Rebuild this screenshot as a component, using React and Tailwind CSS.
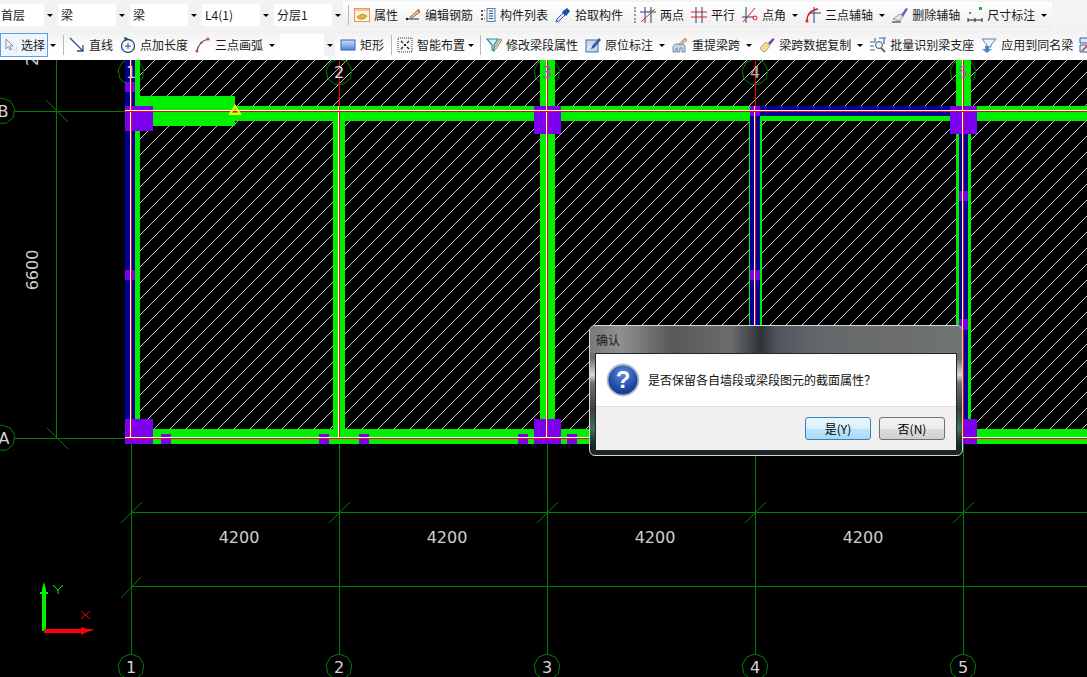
import React from 'react';

const FONT = '"Noto Sans CJK SC", "Liberation Sans", sans-serif';
const GREEN = '#00f000';
const BLUE = '#000096';
const PURPLE = '#7a00ee';
const GRID = '#008000';

const Svg = ({ children }) => (
  <svg width="16" height="16" viewBox="0 0 16 16" fill="none" className="shrink-0">{children}</svg>
);

const icons = {
  props: <Svg><rect x="0.5" y="1.5" width="15" height="13" fill="#fdf3dc" stroke="#e59a5c" /><rect x="1" y="2" width="14" height="2" fill="#f3c68f" /><path d="M3 10l5-3 5 2-3 3H5z" fill="#e8b33c" stroke="#a9782a" strokeWidth="0.7" /></Svg>,
  rebar: <Svg><path d="M1 12h13" stroke="#222" /><path d="M5 10l8-7 2 2-8 6z" fill="#e5c18d" stroke="#8a5a3a" strokeWidth="0.8" /><path d="M12 3l2-1 1 2-1 1z" fill="#d05050" /><circle cx="2" cy="12" r="1.2" fill="#222" /></Svg>,
  list: <Svg><rect x="7" y="1.5" width="8" height="13" fill="#e9f0f8" stroke="#5a7ea8" /><path d="M9 4h4M9 6.500h4M9 9h4M9 11.500h4" stroke="#3a5a88" /><path d="M1 3h2v2H1zM1 7h2v2H1zM1 11h2v2H1zM4 3h1v1H4zM4 11h1v1H4z" fill="#555" /></Svg>,
  dropper: <Svg><path d="M1 15l1-3 6-6 2 2-6 6z" fill="#dce8f6" stroke="#2e5aa8" /><path d="M8 4l4-3 3 3-3 4-1 1-4-4z" fill="#1f4fa0" /></Svg>,
  twoPoint: <Svg><path d="M5 0v16M11 0v16M0 5h16" stroke="#2d3a78" /><path d="M1 15L15 2" stroke="#d82020" /><circle cx="11" cy="4.500" r="1.700" fill="#3fa03f" /></Svg>,
  parallel: <Svg><path d="M5 0v16M11 0v16" stroke="#2d3a78" /><path d="M0 5h16M0 10h16" stroke="#d82020" /></Svg>,
  angle: <Svg><path d="M4 0v16M0 10h12" stroke="#2d3a78" /><path d="M1 15L13 1" stroke="#d82020" /><circle cx="13" cy="11" r="2" stroke="#d82020" /></Svg>,
  arc: <Svg><path d="M9 0v16M4 6h12" stroke="#2d3a78" /><path d="M2 14C2 7 6 3 13 2" stroke="#d82020" strokeWidth="1.300" /><circle cx="2" cy="14" r="1.500" fill="#d82020" /></Svg>,
  erase: <Svg><path d="M9 8l5-7 2 1-5 8z" fill="#6a5acd" /><path d="M11 9l-3 -2c-2 1-4 3-7 5l6 2c2-1 3-3 4-5z" fill="#e8e2d0" stroke="#777" strokeWidth="0.7" /><path d="M0 15h9" stroke="#222" /></Svg>,
  dim: <Svg><rect x="2" y="5" width="2" height="2" fill="#36a836" /><rect x="12" y="0" width="3" height="3" fill="#36a836" /><path d="M1 13h14M1 11v4M15 11v4M8 11v4" stroke="#222" /></Svg>,
  cursor: <Svg><path d="M3 2v10l2.500-2.500 1.500 3.500 1.500-.6-1.500-3.400H10z" fill="#f4f6f8" stroke="#8a8f96" /><path d="M11 13h1M13 11h1M13 14h1" stroke="#b0b4ba" /></Svg>,
  line: <Svg><path d="M1 1l13 13M14 8v6H8" stroke="#28507f" strokeWidth="1.300" /></Svg>,
  pointLen: <Svg><circle cx="8" cy="9" r="6.500" stroke="#2c4a78" strokeWidth="1.300" /><path d="M5 9h6M8 6v6" stroke="#2c4a78" /><path d="M4 0l4 1-3 3z" fill="#2c4a78" /></Svg>,
  threeArc: <Svg><path d="M2 14C3 8 7 4 13 2" stroke="#3d5f88" strokeWidth="1.300" /><circle cx="2" cy="14" r="1.600" fill="#d0503c" /><circle cx="6" cy="6" r="1.300" fill="#d0503c" /><circle cx="13" cy="2" r="1.600" fill="#d0503c" /></Svg>,
  rect: <Svg><defs><linearGradient id="rg" x1="0" y1="0" x2="0" y2="1"><stop offset="0" stopColor="#cfe0f8" /><stop offset="1" stopColor="#4f86dc" /></linearGradient></defs><rect x="1" y="3" width="14" height="10" fill="url(#rg)" stroke="#2f62b8" /></Svg>,
  smart: <Svg><rect x="1" y="1" width="14" height="14" stroke="#333" strokeDasharray="1 1" fill="#f2f6fb" /><path d="M4 4l2 2M12 4l-2 2M4 12l2-2M12 12l-2-2" stroke="#222" strokeWidth="1.300" /><rect x="7" y="7" width="2" height="2" fill="#222" /></Svg>,
  funnel: <Svg><path d="M1 2h11L8 8v6l-2-1V8z" fill="#d8f0f4" stroke="#2a8ea0" strokeWidth="1.200" /><path d="M8 11l6-9 2 1-6 9-2 1z" fill="#e8d5a8" stroke="#555" strokeWidth="0.600" /></Svg>,
  origin: <Svg><rect x="1" y="3" width="12" height="12" fill="#c7d7ee" stroke="#4a6f9e" /><path d="M2 13l3-4 3 2 3-3" stroke="#fff" /><path d="M7 9l7-8 2 2-7 8-3 1z" fill="#2e5fa8" /></Svg>,
  reBeam: <Svg><path d="M1 15V10c0-2 2-3 3-3h6c2 0 3 1 3 3v5h-3v-4H8v4H5v-4H4v4z" fill="#c7d5e6" stroke="#5b7ba0" strokeWidth="0.800" /><path d="M7 7l6-6 2 2-6 5z" fill="#e6c49a" stroke="#8a5a3a" strokeWidth="0.600" /></Svg>,
  brush: <Svg><path d="M1 11l6-6 4 4-5 6c-2 0-4-2-5-4z" fill="#f0dd96" stroke="#9a8a50" strokeWidth="0.700" /><path d="M9 6l5-5 1.500 1.500L11 8z" fill="#5d4aa8" /></Svg>,
  batch: <Svg><path d="M0 5h5M0 9h4M0 13h5M9 1h7M14 1v6M5 1v4" stroke="#2a6fb5" strokeWidth="1.200" /><circle cx="9" cy="8" r="3.500" fill="#e8f2fb" stroke="#555" /><path d="M11 11l4 4" stroke="#666" strokeWidth="2" /></Svg>,
  apply: <Svg><path d="M1 2h14L10 8v2H6V8z" fill="#eef4fb" stroke="#5f7fa8" /><path d="M4 9h4v3h3l-5 4-5-4h3z" fill="#4a86d0" /></Svg>,
  last: <Svg><path d="M1 1h9v5H1zM1 8h9v7H1z" fill="#dfe9f5" stroke="#2a5fa0" /><path d="M3 14l6-6" stroke="#c83030" strokeWidth="1.500" /></Svg>,
};

const Arrow = ({ className = '' }) => (
  <div className={`w-0 h-0 shrink-0 border-x-[3px] border-t-[3px] border-x-transparent border-t-black ${className}`} />
);

const Sep = ({ className = '' }) => <div className={`w-px h-[20px] shrink-0 bg-[#b8b8b8] ${className}`} />;

const Select = ({ label, className }) => (
  <div className={`flex h-[22px] items-stretch bg-white shrink-0 ${className}`}>
    <span className="flex-1 pl-[1px] text-[12px] leading-[22px] whitespace-nowrap">{label}</span>
    <div className="flex w-[11px] items-center justify-center bg-[#f1f1f1]">
      <Arrow />
    </div>
  </div>
);

const Tool = ({ icon, label, className = '' }) => (
  <div className={`flex items-center shrink-0 ${className}`}>
    {icons[icon]}
    <span className="ml-[4px] text-[12px] leading-none whitespace-nowrap">{label}</span>
  </div>
);

const TopBar = () => (
  <div className="flex h-[30px] items-center bg-[#f3f3f3] overflow-hidden">
    <Select label="首层" className="w-[55px]" />
    <Select label="梁" className="w-[69px] ml-[3px] pl-[2px]" />
    <Select label="梁" className="w-[69px] ml-[3px] pl-[2px]" />
    <Select label="L4(1)" className="w-[69px] ml-[3px] pl-[2px]" />
    <Select label="分层1" className="w-[69px] ml-[3px] pl-[2px]" />
    <div className="flex h-[26px] w-[709px] items-center bg-gradient-to-b from-[#ffffff] to-[#eeeeee]">
      <Sep className="ml-[5px]" />
      <Tool icon="props" label="属性" className="ml-[5px]" />
      <Tool icon="rebar" label="编辑钢筋" className="ml-[7px]" />
      <Tool icon="list" label="构件列表" className="ml-[7px]" />
      <Tool icon="dropper" label="拾取构件" className="ml-[7px]" />
      <div className="ml-[11px] h-[16px] w-[2px] shrink-0 border-l-2 border-dotted border-[#999]" />
      <Tool icon="twoPoint" label="两点" className="ml-[4px]" />
      <Tool icon="parallel" label="平行" className="ml-[7px]" />
      <Tool icon="angle" label="点角" className="ml-[7px]" />
      <Arrow className="ml-[6px]" />
      <Tool icon="arc" label="三点辅轴" className="ml-[7px]" />
      <Arrow className="ml-[6px]" />
      <Tool icon="erase" label="删除辅轴" className="ml-[7px]" />
      <Tool icon="dim" label="尺寸标注" className="ml-[7px]" />
      <Arrow className="ml-[6px]" />
    </div>
  </div>
);

const DrawBar = () => (
  <div className="flex h-[30px] items-center bg-gradient-to-b from-[#f0f0f0] via-[#fcfcfc] to-[#ffffff] overflow-hidden">
    <div className="flex h-[24px] w-[48px] shrink-0 items-center border border-[#5aa0e0] bg-[#eef6fd] pl-[2px]">
      {icons.cursor}
      <span className="ml-[2px] text-[12px] leading-none whitespace-nowrap">选择</span>
    </div>
    <Arrow className="ml-[2px]" />
    <Sep className="ml-[7px]" />
    <Tool icon="line" label="直线" className="ml-[5px]" />
    <Tool icon="pointLen" label="点加长度" className="ml-[7px]" />
    <Tool icon="threeArc" label="三点画弧" className="ml-[7px]" />
    <Arrow className="ml-[6px]" />
    <Select label="" className="w-[55px] ml-[5px]" />
    <Tool icon="rect" label="矩形" className="ml-[5px]" />
    <Sep className="ml-[7px]" />
    <Tool icon="smart" label="智能布置" className="ml-[5px]" />
    <Arrow className="ml-[3px]" />
    <Sep className="ml-[6px]" />
    <Tool icon="funnel" label="修改梁段属性" className="ml-[5px]" />
    <Tool icon="origin" label="原位标注" className="ml-[7px]" />
    <Arrow className="ml-[6px]" />
    <Tool icon="reBeam" label="重提梁跨" className="ml-[7px]" />
    <Arrow className="ml-[6px]" />
    <Tool icon="brush" label="梁跨数据复制" className="ml-[7px]" />
    <Arrow className="ml-[6px]" />
    <Tool icon="batch" label="批量识别梁支座" className="ml-[7px]" />
    <Tool icon="apply" label="应用到同名梁" className="ml-[7px]" />
    <div className="ml-[6px] shrink-0">{icons.last}</div>
  </div>
);

// x, y, w, h, colour, in screenshot coordinates
const beams = [
  // wall strips and beams
  [125, 60, 10, 359, BLUE], [135, 60, 5, 369, GREEN],
  [333, 106, 12, 323, GREEN],
  [540, 60, 15, 369, GREEN],
  [749, 121, 1, 210, GREEN], [750, 106, 10, 225, BLUE], [760, 116, 2, 215, GREEN],
  [956, 60, 15, 46, GREEN], [956, 134, 3, 300, GREEN], [959, 134, 9, 300, BLUE], [968, 134, 3, 300, GREEN],
  [135, 96, 100, 30, GREEN],
  [235, 106, 515, 15, GREEN], [760, 116, 190, 5, GREEN], [760, 106, 190, 10, BLUE], [977, 106, 110, 15, GREEN],
  [153, 429, 934, 15, GREEN],
  // columns
  [125, 106, 28, 25, PURPLE], [534, 106, 27, 28, PURPLE], [950, 106, 27, 28, PURPLE],
  [125, 419, 28, 25, PURPLE], [534, 419, 27, 25, PURPLE], [950, 419, 27, 25, PURPLE],
  // small markers
  [125, 82, 10, 10, PURPLE], [125, 270, 10, 10, PURPLE], [750, 106, 10, 10, PURPLE], [750, 270, 10, 10, PURPLE],
  [959, 191, 9, 10, PURPLE], [959, 319, 9, 11, PURPLE],
  [161, 434, 10, 10, PURPLE], [319, 434, 10, 10, PURPLE], [359, 434, 10, 10, PURPLE],
  [518, 434, 10, 10, PURPLE], [567, 434, 10, 10, PURPLE],
];

const axisLines = [
  [130, 60, 1, 378, '#fff'], [131, 60, 1, 378, '#ff0000'],
  [338, 106, 1, 332, '#fff'], [339, 60, 1, 378, '#ff0000'],
  [546, 60, 1, 378, '#fff'], [547, 60, 1, 378, '#ff0000'],
  [754, 106, 1, 332, '#fff'], [755, 60, 1, 378, '#ff0000'],
  [962, 60, 1, 378, '#fff'], [963, 60, 1, 378, '#ff0000'],
  [125, 110, 962, 1, '#fff'], [125, 111, 962, 1, '#ff0000'],
  [125, 437, 962, 1, '#fff'], [125, 438, 962, 1, '#ff0000'],
];

const xs = [131, 339, 547, 755, 963];
const topLabels = [['1', '#d8d8a8'], ['2', '#d8e4e8'], ['3', '#b040c0'], ['4', '#b0b0b0'], ['5', '#a860b0']];
const hatchSteps = Array.from({ length: 16 }, (_, i) => i);

const ring = (cx, cy, r = 13) => {
  const pts = [];
  for (let i = 0; i < 9; i++) {
    const a = (Math.PI * 2 * i) / 9 - Math.PI / 2;
    pts.push(`${cx + r * Math.cos(a)},${cy + r * Math.sin(a)}`);
  }
  return pts.join(' ');
};

const CadCanvas = () => (
  <svg width="1087" height="617" viewBox="0 60 1087 617" className="block" style={{ fontFamily: '"DejaVu Sans", sans-serif' }}>
    <defs>
      <pattern id="hatch" width="16" height="16" patternUnits="userSpaceOnUse">
        {hatchSteps.map((i) => <rect key={i} x={i} y={(22 - i) % 16} width="1" height="1" fill="#c8c8c8" />)}
      </pattern>
    </defs>
    <rect x="0" y="60" width="1087" height="617" fill="#000" />
    <rect x="140" y="60" width="947" height="369" fill="url(#hatch)" shapeRendering="crispEdges" />

    {/* grid */}
    <g stroke={GRID} strokeWidth="1" shapeRendering="crispEdges">
      <path d="M56.500 60V438M15 111.500H125M15 438.500H125M131.500 512.500H1087M131.500 586.500H1087" />
      {xs.map((x) => <path key={x} d={`M${x + 0.5} 444V655`} />)}
    </g>
    <g stroke={GRID} strokeWidth="1">
      <path d="M46 100L68 122M47 428L68 449M121 598L141 577" />
      {xs.map((x) => <path key={x} d={`M${x - 10} 523L${x + 11} 502`} />)}
      {xs.map((x) => <polygon key={x} points={ring(x, 72)} fill="none" />)}
      {xs.map((x) => <polygon key={x} points={ring(x, 667)} fill="none" />)}
      <polygon points={ring(2, 111)} fill="none" />
      <polygon points={ring(2, 438)} fill="none" />
    </g>

    <g shapeRendering="crispEdges">
      {beams.map(([x, y, w, h, c], i) => <rect key={i} x={x} y={y} width={w} height={h} fill={c} />)}
      {axisLines.map(([x, y, w, h, c], i) => <rect key={i} x={x} y={y} width={w} height={h} fill={c} />)}
    </g>

    <path d="M235 106L240 114H230Z" fill="none" stroke="#ffff00" strokeWidth="2" />

    {/* labels */}
    <g fontSize="16" textAnchor="middle">
      {xs.map((x, i) => <text key={x} x={x} y="78" fill={topLabels[i][1]}>{i + 1}</text>)}
      {xs.map((x, i) => <text key={x} x={x} y="673" fill="#d4d4d4">{i + 1}</text>)}
      <text x="3" y="117" fill="#d4d4d4">B</text>
      <text x="4" y="444" fill="#d4d4d4">A</text>
      {[239, 447, 655, 863].map((x) => <text key={x} x={x} y="543" fill="#d0d0d0">4200</text>)}
      <text transform="translate(38 270) rotate(-90)" fill="#d0d0d0">6600</text>
      <text transform="translate(38 66) rotate(-90)" fill="#d0d0d0" textAnchor="start">2</text>
    </g>

    {/* origin marker */}
    <path d="M44 582l2 7v3h2v2h-2v37h-4v-37h-2v-2h2v-3z" fill="#00ee00" />
    <path d="M44 629h37v-2l6 2h6v1l-6 2-6 3v-2H44z" fill="#ff0000" />
    <path d="M53 585l5 5 5-5M58 590v4" stroke="#00ee00" fill="none" />
    <path d="M81 611l9 8M90 611l-9 8" stroke="#ff0000" fill="none" />
  </svg>
);

const ConfirmDialog = () => (
  <div className="absolute left-[589px] top-[265px] flex h-[131px] w-[374px] flex-col rounded-[6px] border border-[#d4d8d8] bg-[linear-gradient(180deg,#6e7071_0%,#6a6c6d_25%,#d8d8d8_38%,#6f7173_44%,#3a4040_65%,#3f6f58_80%,#1c2426_92%,#1c2426_100%)] px-[5px]" style={{ fontFamily: FONT }}>
    <div className="-mx-[5px] flex h-[27px] items-center rounded-t-[5px] bg-[linear-gradient(90deg,#77797a_0%,#8f9090_8%,#58595a_22%,#6a6c6e_38%,#2e3136_46%,#50545e_50%,#65686a_62%,#6c6e6f_85%,#6f7575_100%)] pl-[6px] text-[12px] text-[#1c1c1c]">
      确认
    </div>
    <div className="flex h-[98px] flex-col border border-[#20282a] bg-white">
      <div className="flex h-[52px] items-center pl-[10px]">
        <svg width="34" height="34" viewBox="0 0 34 34" className="shrink-0">
          <defs>
            <radialGradient id="qm" cx="0.5" cy="0.3" r="0.8">
              <stop offset="0" stopColor="#5f86d8" />
              <stop offset="0.6" stopColor="#1f4aa8" />
              <stop offset="1" stopColor="#12307c" />
            </radialGradient>
          </defs>
          <circle cx="17" cy="17" r="15.500" fill="url(#qm)" stroke="#b8bcc4" strokeWidth="1.800" />
          <text x="17" y="25" textAnchor="middle" fontSize="24" fontWeight="700" fill="#fff" fontFamily='"Liberation Sans", sans-serif'>?</text>
        </svg>
        <span className="ml-[8px] text-[12px] leading-none whitespace-nowrap text-[#111]">是否保留各自墙段或梁段图元的截面属性？</span>
      </div>
      <div className="flex flex-1 items-center justify-end gap-[8px] border-t border-[#dfdfdf] bg-[#f0f0f0] pr-[11px]">
        <button className="h-[23px] w-[66px] rounded-[3px] border border-[#3c7fb1] bg-[linear-gradient(180deg,#eaf6fd_0%,#d9f0fc_50%,#bee6fd_50%,#a7d9f5_100%)] text-[12px] leading-none text-black">是(Y)</button>
        <button className="h-[23px] w-[66px] rounded-[3px] border border-[#707070] bg-[linear-gradient(180deg,#f2f2f2_0%,#ebebeb_50%,#dddddd_50%,#cfcfcf_100%)] text-[12px] leading-none text-black">否(N)</button>
      </div>
    </div>
  </div>
);

export default function App() {
  return (
    <div className="w-[1087px] h-[677px] overflow-hidden bg-black text-[#1a1a1a]" style={{ fontFamily: FONT }}>
      <TopBar />
      <DrawBar />
      <div className="relative h-[617px]">
        <CadCanvas />
        <ConfirmDialog />
      </div>
    </div>
  );
}
